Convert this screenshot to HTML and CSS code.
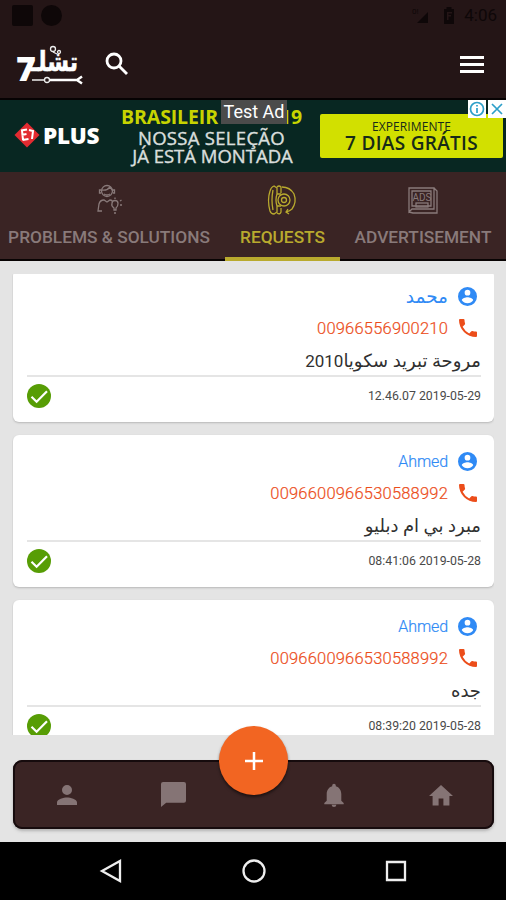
FILE: index.html
```html
<!DOCTYPE html>
<html lang="en">
<head>
<meta charset="utf-8">
<title>Requests</title>
<link rel="stylesheet" href="styles.css">
</head>
<body>
<svg class="defs" width="0" height="0" aria-hidden="true">
  <symbol id="account" viewBox="2 2 20 20"><path fill-rule="evenodd" d="M12 2a10 10 0 1 0 0 20 10 10 0 0 0 0-20zm0 3a3 3 0 1 1 0 6 3 3 0 0 1 0-6zm0 14.2a7.2 7.2 0 0 1-6-3.22c.03-1.99 4-3.08 6-3.08s5.97 1.09 6 3.08a7.2 7.2 0 0 1-6 3.22z"/></symbol>
  <symbol id="phone" viewBox="3 3 18 18"><path d="M6.62 10.79a15.15 15.15 0 0 0 6.59 6.59l2.2-2.2a1 1 0 0 1 1.02-.24c1.12.37 2.33.57 3.57.57a1 1 0 0 1 1 1V20a1 1 0 0 1-1 1A17 17 0 0 1 3 4a1 1 0 0 1 1-1h3.5a1 1 0 0 1 1 1c0 1.25.2 2.45.57 3.57a1 1 0 0 1-.25 1.02z"/></symbol>
  <symbol id="check" viewBox="0 0 24 24"><circle cx="12" cy="12" r="12" fill="#579d05"/><path d="M4.5 12.8l5.1 5L20 7.3" fill="none" stroke="#fff" stroke-width="2.2"/></symbol>
</svg>
<div class="screen">
  <header class="top">
    <div class="status">
      <i class="square"></i><i class="dot"></i>
      <div class="status-right">
        <svg width="18" height="18" viewBox="0 0 18 18"><text x="0" y="8" font-size="8">0!</text><path d="M16 6v11H5z"/></svg>
        <svg class="battery" width="12" height="17" viewBox="0 0 12 17"><path fill-rule="evenodd" d="M3.5 0h5v2H11v15H1V2h2.500zM4 5v8h1.500V9.500H8V8H5.500V6.500H9V5z"/></svg>
        <span>4:06</span>
      </div>
    </div>
    <div class="appbar">
      <svg class="logo" width="68" height="42" viewBox="0 0 68 42">
        <text class="logo-seven" x="0" y="38">7</text>
        <text class="logo-word" transform="translate(62 28) scale(.92 1.15)" direction="rtl">تشلـ</text>
        <circle cx="37" cy="6" r="2.500"/><circle cx="43" cy="9" r="1.500"/><path class="logo-link" d="M37 9l4 2M16 37h12"/>
        <path class="logo-wrench" d="M33 37H61M66 33.500l-5 3.500 5 3.500"/><circle class="nut" cx="31" cy="37" r="2.500"/>
      </svg>
      <svg class="search" width="24" height="24" viewBox="0 0 24 24"><circle cx="9" cy="9" r="7"/><path d="M14 14l8 8"/></svg>
      <div class="burger"><i></i><i></i><i></i></div>
    </div>
  </header>

  <section class="ad">
    <div class="brand">
      <svg width="26" height="26" viewBox="0 0 26 26"><path d="M13 .5L25.500 13 13 25.500.5 13z" fill="#e32b31"/><path d="M7 8.500l6-1M7.500 13l5-1M8.500 18l6-1M8 8.500l1 9.500M15 8l4 1-1 8" fill="none" stroke="#fff" stroke-width="2"/></svg>
      <b>PLUS</b>
    </div>
    <div class="pitch"><div class="league"><b>BRASILEIR</b><b>19</b></div><span class="l1">NOSSA SELEÇÃO</span><span class="l2">JÁ ESTÁ MONTADA</span></div>
    <div class="cta"><small>EXPERIMENTE</small><b>7 DIAS GRÁTIS</b></div>
    <span class="test">Test Ad</span>
    <div class="ad-choice">
      <svg width="18" height="18" viewBox="0 0 18 18"><circle cx="9" cy="9" r="6.500"/><path d="M9 8v5M9 5v1.500"/></svg>
      <svg width="18" height="18" viewBox="0 0 18 18"><path d="M4 4l10 10M14 4L4 14"/></svg>
    </div>
  </section>

  <nav class="tabs">
    <div class="tab problems">
      <svg width="30" height="32" viewBox="0 0 30 32"><circle cx="13" cy="7" r="5.500"/><path d="M7 6H5.500v3H7M19 6h1.500v3H19M8 6q5 1 8-3l3 4M10 10q3 2 6 0M8 27H4l1-7q1-4 5-4l3 2 3-2q2 0 3 2M20 26v-2q-3-2-2-4.500a3 3 0 0 1 6 0q0 3-2 4.500v2zM20 29h2M21 15v-1.500M26 17l1.500-1M26 21h2"/></svg>
      <span>PROBLEMS &amp; SOLUTIONS</span>
    </div>
    <div class="tab requests active">
      <svg width="30" height="32" viewBox="0 0 30 32"><path d="M10 4v6q-2 6 0 12v6l-3 2q-3 0-4-3-3-11 0-20 1-4 4-5zM6 6q-2 10 0 20M10 3q2-2 4 0v6M10 29q3 2 4-1v-4M15 3q8 0 12 7 3 8-2 15-2 2-6 3M21 25l-2 3 3 2M10 10h4M10 22h4"/><circle cx="17" cy="16" r="6"/><circle cx="17" cy="16" r="2.500"/></svg>
      <span>REQUESTS</span>
    </div>
    <div class="tab advert">
      <svg width="30" height="32" viewBox="0 0 30 32"><path d="M1 4h25v21H4l-3 3zM26 4l3 3v22H5l-4-1M4 7h19v15H4z"/><text x="4.500" y="16.500">ADS</text><rect x="8" y="19" width="12" height="4"/></svg>
      <span>ADVERTISEMENT</span>
    </div>
  </nav>

  <main class="list">
    <div class="feed">
      <article class="card">
        <div class="row name"><span class="arabic" dir="rtl">محمد</span><svg><use href="#account"/></svg></div>
        <div class="row phone"><span>00966556900210</span><svg><use href="#phone"/></svg></div>
        <p class="desc" dir="rtl">مروحة تبريد سكويا<span>2010</span></p>
        <footer><svg><use href="#check"/></svg><time>12.46.07 2019-05-29</time></footer>
      </article>
      <article class="card">
        <div class="row name"><span>Ahmed</span><svg><use href="#account"/></svg></div>
        <div class="row phone"><span>0096600966530588992</span><svg><use href="#phone"/></svg></div>
        <p class="desc" dir="rtl">مبرد بي ام دبليو</p>
        <footer><svg><use href="#check"/></svg><time>08:41:06 2019-05-28</time></footer>
      </article>
      <article class="card">
        <div class="row name"><span>Ahmed</span><svg><use href="#account"/></svg></div>
        <div class="row phone"><span>0096600966530588992</span><svg><use href="#phone"/></svg></div>
        <p class="desc" dir="rtl">جده</p>
        <footer><svg><use href="#check"/></svg><time>08:39:20 2019-05-28</time></footer>
      </article>
    </div>
  </main>

  <div class="dock-area">
    <nav class="dock">
      <svg viewBox="0 0 24 24"><path d="M12 12a4 4 0 1 0 0-8 4 4 0 0 0 0 8zm0 2c-2.670 0-8 1.340-8 4v2h16v-2c0-2.660-5.330-4-8-4z" transform="translate(-6 -6) scale(1.5)"/></svg>
      <svg class="chat" viewBox="0 0 24 24"><path d="M2 0h20q2 0 2 2v16q0 2-2 2H5l-5 4V2q0-2 2-2z"/></svg>
      <span></span>
      <svg class="bell" viewBox="0 0 24 24"><path d="M12 24q2.200 0 2.400-2.200H9.600Q9.800 24 12 24zm7.300-6.300v-6.500c0-4-2-7-5.500-8V2.500a1.800 1.800 0 0 0-3.600 0v.7c-3.500 1-5.500 4-5.500 8v6.500L2.300 20v1.200h19.400V20z"/></svg>
      <svg class="home" viewBox="0 0 24 24"><path d="M9.600 22.500v-7h4.800v7h6V13H24L12 2 0 13h3.600v9.500z"/></svg>
    </nav>
    <div class="fab"><svg width="20" height="20" viewBox="0 0 20 20"><path d="M10 1v18M1 10h18"/></svg></div>
  </div>

  <div class="sysnav">
    <svg viewBox="0 0 24 24"><path d="M21 2v20L3 12z"/></svg>
    <svg viewBox="0 0 24 24"><circle cx="12" cy="12" r="10.500"/></svg>
    <svg viewBox="0 0 24 24"><path d="M3 3h18v18H3z"/></svg>
  </div>
</div>
</body>
</html>
```
FILE: styles.css
```css
* { box-sizing: border-box; }
body { margin: 0; font-family: Roboto, "DejaVu Sans", sans-serif; }
svg { overflow: visible; flex: none; display: block; }
.defs { position: absolute; }
.screen { width: 506px; height: 900px; display: flex; flex-direction: column; background: #e4e4e4; overflow: hidden; }

.top { height: 100px; background: #241516; border-bottom: 2px solid #060203; }
.status { height: 30px; display: flex; align-items: center; padding-left: 12px; gap: 8px; color: #0e0708; }
.square { width: 21px; height: 21px; background: #0e0708; border-radius: 2px; }
.dot { width: 21px; height: 21px; background: #0e0708; border-radius: 50%; }
.status-right { margin-left: auto; margin-right: 9px; display: flex; align-items: center; fill: #0e0708; font-size: 17px; }
.battery { margin: 0 9px 0 13px; }
.appbar { height: 68px; display: flex; align-items: center; padding: 0 22px 0 16px; }
.logo { fill: #fff; }
.logo-seven { font: 800 34px "Open Sans", sans-serif; }
.logo-word { font: bold 24px "DejaVu Sans", sans-serif; stroke: #fff; stroke-width: .5; }
.logo circle, .logo-link { fill: none; stroke: #eee; stroke-width: 1.3; }
.logo-wrench { fill: none; stroke: #fff; stroke-width: 2.500; }
.search { margin-left: 21px; fill: none; stroke: #fff; stroke-width: 2.800; }
.burger { margin-left: auto; width: 24px; display: flex; flex-direction: column; gap: 4px; }
.burger i { height: 3px; background: #fff; }

.ad { position: relative; height: 72px; background: #082722; display: flex; overflow: hidden; color: #fff; white-space: nowrap; }
.brand { width: 116px; padding-left: 14px; display: flex; align-items: center; gap: 3px; height: 70px; }
.brand b { font: 800 22.5px "Open Sans", sans-serif; letter-spacing: -.3px; }
.pitch { width: 193px; padding-top: 5px; text-align: center; display: flex; flex-direction: column; font-family: "Open Sans", sans-serif; }
.league { display: flex; justify-content: space-between; padding: 0 7px 0 5px; color: #c7d400; font-size: 19.5px; line-height: 24px; letter-spacing: -.1px; }
.pitch span { font-size: 18.5px; line-height: 18px; color: #d9dedc; -webkit-text-stroke: .4px #d9dedc; }
.pitch .l1 { letter-spacing: .3px; margin-right: 2px; }
.pitch .l2 { letter-spacing: 0; }
.cta { margin: 14px 0 0 11px; width: 183px; height: 44px; background: #d2e000; border-radius: 2px; color: #172b18; display: flex; flex-direction: column; align-items: center; font-family: "Open Sans", sans-serif; }
.cta small { font-size: 12px; line-height: 14px; margin-top: 6px; letter-spacing: .1px; }
.cta b { font-size: 19px; line-height: 19px; font-weight: 600; letter-spacing: .3px; }
.test { position: absolute; left: 221px; top: -1px; width: 66px; height: 25px; background: #4b4b4b; text-align: center; font-size: 18px; line-height: 26px; }
.ad-choice { position: absolute; right: 0; top: 0; display: flex; gap: 2px; }
.ad-choice svg { background: #fff; fill: none; stroke: #2d9fc9; stroke-width: 1.700; }

.tabs { height: 89px; background: #3a2424; display: flex; border-bottom: 2px solid #080303; color: #897a7a; }
.tab { height: 89px; padding-top: 12px; display: flex; flex-direction: column; align-items: center; font-size: 17.300px; font-weight: 500; white-space: nowrap; }
.tab svg { fill: none; stroke: currentColor; stroke-width: 1.300; margin-bottom: 11px; }
.tab text { font: 10px Roboto, sans-serif; fill: currentColor; stroke: none; }
.tab span { line-height: 21px; }
.problems { width: 225px; padding-right: 7px; }
.requests { width: 115px; }
.requests svg { margin-right: 2px; }
.advert { width: 166px; }
.active { color: #b9aa2e; border-bottom: 4px solid #b9aa2e; }

.list { margin: 13px 12px 0; height: 461px; overflow: hidden; padding: 0 0 0 1px; }
.feed { margin-top: -4px; display: flex; flex-direction: column; gap: 13px; }
.card { height: 152px; flex: none; background: #fff; border-radius: 6px; box-shadow: 0 1px 2px #9999; padding: 10px 13px 0 14px; }
.row { height: 32px; display: flex; align-items: center; justify-content: flex-end; gap: 10px; font-size: 16.500px; font-weight: 300; }
.row svg { width: 19px; height: 19px; margin-right: 4px; fill: currentColor; }
.row span { -webkit-text-stroke: .2px currentColor; }
.name { color: #2f8af5; }
.name span { font-size: 16px; letter-spacing: -.1px; }
.name .arabic { letter-spacing: 0; font: 18.5px "DejaVu Sans", sans-serif; -webkit-text-stroke: 0; }
.phone { color: #ec4d1a; gap: 11px; }
.phone span { letter-spacing: .2px; }
.phone svg { width: 18px; height: 18px; }
.desc { height: 33px; margin: 0; padding-top: 2px; border-bottom: 2px solid #e5e5e5; font: 18px/29px Roboto, "DejaVu Sans", sans-serif; color: #303030; white-space: nowrap; }
.desc span { font-size: 17px; letter-spacing: -.5px; }
.card footer { height: 38px; display: flex; align-items: center; justify-content: space-between; font-size: 12.300px; color: #494949; }
.card footer svg { width: 24px; height: 24px; }

.dock-area { position: relative; height: 107px; padding: 25px 12px 0 13px; }
.dock { height: 69px; background: #3a2424; border-radius: 9px; box-shadow: inset 0 0 0 2px #160b0d, 0 2px 3px #8888; display: grid; grid-template-columns: 107px 107px 53px 107px 107px; align-items: center; }
.dock svg { width: 20px; height: 20px; margin: 0 auto; fill: #857475; }
.dock .chat { width: 25px; height: 25px; }
.dock .bell, .dock .home { width: 24px; height: 24px; }
.fab { position: absolute; left: 219px; top: -9px; width: 69px; height: 69px; border-radius: 50%; background: #f26522; box-shadow: 0 2px 3px #0008; display: grid; place-items: center; }
.fab svg { fill: none; stroke: #fff; stroke-width: 2.500; }

.sysnav { height: 58px; background: #000; display: flex; justify-content: space-between; align-items: center; padding: 0 98px 0 99px; }
.sysnav svg { width: 24px; height: 24px; fill: none; stroke: #eee; stroke-width: 2.300; }
```
